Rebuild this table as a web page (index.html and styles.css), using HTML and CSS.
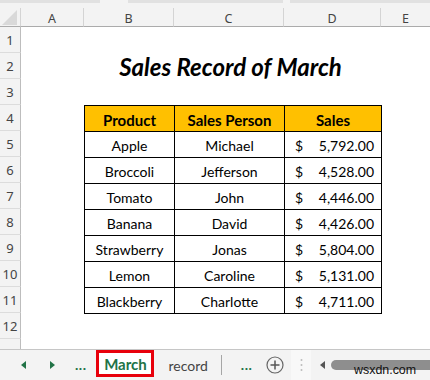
FILE: index.html
```html
<!DOCTYPE html>
<html>
<head>
<meta charset="utf-8">
<link rel="stylesheet" href="styles.css">
</head>
<body>
<div class="app">
  <div class="edge"><span class="seg s1"></span><span class="gap g1"></span><span class="seg s2"></span><span class="gap g2"></span><span class="seg s3"></span></div>
  <div class="sheet">
    <div class="corner"><svg width="15" height="15" viewBox="0 0 15 15"><polygon points="15,0 15,15 0,15" fill="#d9d9d9"/></svg></div>
    <div class="colh">A</div>
    <div class="colh">B</div>
    <div class="colh">C</div>
    <div class="colh">D</div>
    <div class="colh last">E</div>

    <div class="rowh r1">1</div>
    <div class="rowh r2">2</div>
    <div class="rowh r3">3</div>
    <div class="rowh r4">4</div>
    <div class="rowh r5">5</div>
    <div class="rowh r6">6</div>
    <div class="rowh r7">7</div>
    <div class="rowh r8">8</div>
    <div class="rowh r9">9</div>
    <div class="rowh r10">10</div>
    <div class="rowh r11">11</div>
    <div class="rowh r12">12</div>
    <div class="rowh r13"></div>

    <div class="title">Sales Record of March</div>

    <div class="table">
      <div class="th">Product</div><div class="th">Sales Person</div><div class="th">Sales</div>
      <div class="td">Apple</div><div class="td">Michael</div><div class="td money"><span>$</span><span>5,792.00</span></div>
      <div class="td">Broccoli</div><div class="td">Jefferson</div><div class="td money"><span>$</span><span>4,528.00</span></div>
      <div class="td">Tomato</div><div class="td">John</div><div class="td money"><span>$</span><span>4,446.00</span></div>
      <div class="td">Banana</div><div class="td">David</div><div class="td money"><span>$</span><span>4,426.00</span></div>
      <div class="td">Strawberry</div><div class="td">Jonas</div><div class="td money"><span>$</span><span>5,804.00</span></div>
      <div class="td">Lemon</div><div class="td">Caroline</div><div class="td money"><span>$</span><span>5,131.00</span></div>
      <div class="td">Blackberry</div><div class="td">Charlotte</div><div class="td money"><span>$</span><span>4,711.00</span></div>
    </div>
  </div>

  <div class="tabbar">
    <span class="nav"><svg width="5" height="8" viewBox="0 0 5 8"><polygon points="5,0 5,8 0,4" fill="#217346"/></svg></span>
    <span class="nav"><svg width="5" height="8" viewBox="0 0 5 8"><polygon points="0,0 0,8 5,4" fill="#217346"/></svg></span>
    <span class="dots">...</span>
    <span class="tab active">March</span>
    <span class="tab">record</span>
    <span class="sep"></span>
    <span class="dots dots2">...</span>
    <span class="add"><svg width="18" height="18" viewBox="0 0 18 18"><circle cx="9" cy="9" r="8" fill="none" stroke="#666" stroke-width="1.2"/><path d="M9 4.5V13.5M4.5 9H13.5" stroke="#555" stroke-width="1.5"/></svg></span>
    <span class="grip"><svg width="3" height="14" viewBox="0 0 3 14"><circle cx="1.5" cy="2" r="1" fill="#bbb"/><circle cx="1.5" cy="7" r="1" fill="#bbb"/><circle cx="1.5" cy="12" r="1" fill="#bbb"/></svg></span>
    <span class="scroll">
      <svg class="sl" width="5" height="8" viewBox="0 0 5 8"><polygon points="5,0 5,8 0,4" fill="#555"/></svg>
      <span class="thumb"></span>
      <span class="wm">wsxdn.com</span>
    </span>
  </div>
</div>
</body>
</html>
```
FILE: styles.css
```css
* { box-sizing: border-box; }
html, body { margin: 0; padding: 0; }
body { width: 430px; height: 380px; overflow: hidden; background: #fff; font-family: Lato, "Noto Sans", sans-serif; }
.app { width: 430px; height: 380px; display: flex; flex-direction: column; }

.edge { height: 8px; display: flex; background: #f3f3f3; }
.seg { height: 3px; background: #e1e1e1; }
.s1 { width: 100px; }
.g1 { width: 28px; }
.s2 { width: 155px; }
.g2 { width: 7px; }
.s3 { flex: 1; }

.sheet {
  display: grid;
  grid-template-columns: 21px 63px 90px 110px 97px 49px;
  grid-template-rows: 19px repeat(12, 26px) 10px;
  background: #fff;
}
.corner { background: #f3f3f3; border-bottom: 1px solid #ababab; border-right: 1px solid #d4d4d4; display: flex; align-items: flex-start; justify-content: flex-end; padding: 2px 3px 0 0; }
.colh {
  background: #f3f3f3; border-bottom: 1px solid #ababab; border-right: 1px solid #d4d4d4;
  font-family: "Noto Sans", sans-serif; font-size: 12.5px; color: #444;
  display: flex; align-items: center; justify-content: center; padding-top: 2px;
}
.colh.last { border-right: none; }

.rowh {
  grid-column: 1;
  background: #f3f3f3; border-right: 1px solid #bdbdbd; border-bottom: 1px solid #dcdcdc;
  font-family: "Noto Sans", sans-serif; font-size: 13px; color: #444;
  display: flex; align-items: center; justify-content: center; padding-top: 1px;
}
.r1 { grid-row: 2; } .r2 { grid-row: 3; } .r3 { grid-row: 4; } .r4 { grid-row: 5; }
.r5 { grid-row: 6; } .r6 { grid-row: 7; } .r7 { grid-row: 8; } .r8 { grid-row: 9; }
.r9 { grid-row: 10; } .r10 { grid-row: 11; } .r11 { grid-row: 12; } .r12 { grid-row: 13; }
.r13 { grid-row: 14; border-bottom: none; }

.title {
  grid-column: 3 / 6; grid-row: 3;
  display: flex; align-items: center; justify-content: center;
  font-weight: 700; font-style: italic; font-size: 24px; color: #000;
  white-space: nowrap; padding-right: 4px;
}

.table {
  grid-column: 3 / 6; grid-row: 5 / 13;
  justify-self: start; align-self: start;
  width: 298px; height: 209px;
  display: grid;
  grid-template-columns: 89px 109px 96px;
  grid-template-rows: repeat(8, 25px);
  gap: 1px; padding: 1px; background: #000;
}
.th, .td {
  display: flex; align-items: center; justify-content: center;
  font-size: 14px; color: #000; padding-top: 2px;
}
.th { background: #ffc000; font-weight: 700; font-size: 15px; }
.td { background: #fff; }
.td.money { justify-content: space-between; padding-left: 10px; padding-right: 7px; }

.tabbar {
  flex: 1; display: flex; align-items: center;
  background: #f3f3f3; border-top: 1px solid #c6c6c6;
  position: relative;
}
.nav { width: 5px; height: 8px; display: flex; }
.nav:first-child { margin-left: 21px; }
.nav + .nav { margin-left: 24px; }
.dots { color: #217346; font-weight: 700; font-size: 14px; margin-left: 20px; letter-spacing: 0.5px; padding-bottom: 2px; }
.tab { font-size: 14px; height: 100%; display: flex; align-items: center; }
.tab.active {
  margin-left: 10px; width: 58px; height: 27px; align-self: flex-start;
  justify-content: center; border: 3px solid #e8000b; background: #fff;
  color: #217346; font-weight: 700; font-size: 15px;
}
.tab:not(.active) { color: #444; margin-left: 14px; }
.sep { width: 1px; height: 20px; background: #a6a6a6; margin-left: 13px; }
.dots2 { margin-left: 19px; }
.add { margin-left: 14px; width: 18px; height: 18px; display: flex; }
.grip { margin-left: 7px; width: 20px; height: 100%; background: #f8f8f8; display: flex; align-items: center; justify-content: center; }
.scroll { flex: 1; height: 100%; display: flex; align-items: center; position: relative; }
.sl { margin-left: 9px; }
.thumb { margin-left: 6px; flex: 1; height: 10px; background: #8e8e8e; border-radius: 5px 0 0 5px; }
.wm { position: absolute; left: 43px; top: 12px; font-family: "Liberation Sans", Arial, sans-serif; font-size: 13.5px; color: #111; transform: scaleX(0.92); transform-origin: left; }
```
